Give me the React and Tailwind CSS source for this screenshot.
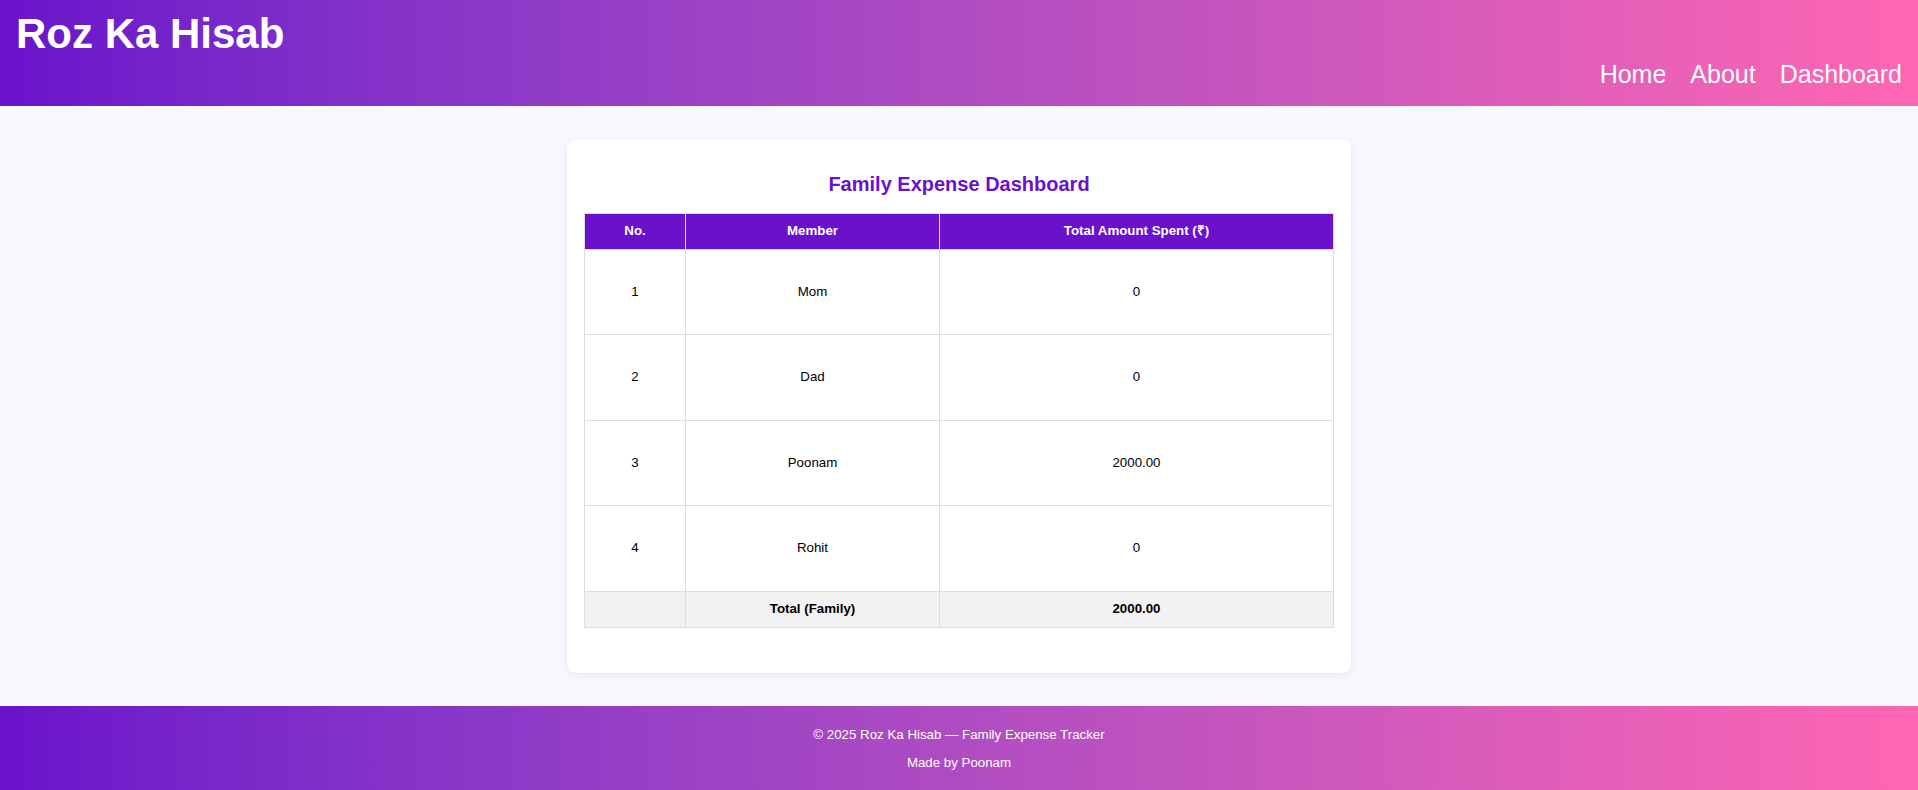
const members = [
  { id: 1, name: "Mom", total: "0" },
  { id: 2, name: "Dad", total: "0" },
  { id: 3, name: "Poonam", total: "2000.00" },
  { id: 4, name: "Rohit", total: "0" },
];

export default function App() {
  return (
    <div className="min-h-screen flex flex-col bg-[#f8f8ff] font-['Liberation_Sans',Arial,sans-serif]">
      <header className="h-[106px] flex justify-between bg-gradient-to-r from-[#6a11cb] to-[#ff66b2] text-white px-4">
        <h1 className="self-start pt-[10px] text-[42px] font-bold leading-[1.15]">Roz Ka Hisab</h1>
        <nav className="self-end pb-[17px] flex gap-[24px] text-[25px] leading-[1.15]">
          <a href="#">Home</a>
          <a href="#">About</a>
          <a href="#">Dashboard</a>
        </nav>
      </header>

      <main className="flex-1 flex justify-center pt-[34px]">
        <div className="w-[784px] h-[533px] bg-white rounded-[9px] shadow-[0_2px_10px_rgba(0,0,0,0.08)] px-[17px] pt-4">
          <h2 className="mt-[17px] mb-[16.6px] text-center text-[20px] leading-[23px] font-bold text-[#6a11cb]">
            Family Expense Dashboard
          </h2>
          <table className="w-full border-collapse text-[13.3px] text-black">
            <thead>
              <tr className="h-[36px] bg-[#6a11cb] text-white">
                <th className="w-[101px] border border-[#ddd] font-bold">No.</th>
                <th className="w-[254px] border border-[#ddd] font-bold">Member</th>
                <th className="border border-[#ddd] font-bold">Total Amount Spent (₹)</th>
              </tr>
            </thead>
            <tbody>
              {members.map((m) => (
                <tr key={m.id} className="h-[85.5px]">
                  <td className="border border-[#ddd] text-center">{m.id}</td>
                  <td className="border border-[#ddd] text-center">{m.name}</td>
                  <td className="border border-[#ddd] text-center">{m.total}</td>
                </tr>
              ))}
              <tr className="h-[36px] bg-[#f2f2f2] font-bold">
                <td className="border border-[#ddd]"></td>
                <td className="border border-[#ddd] text-center">Total (Family)</td>
                <td className="border border-[#ddd] text-center">2000.00</td>
              </tr>
            </tbody>
          </table>
        </div>
      </main>

      <footer className="h-[84px] bg-gradient-to-r from-[#6a11cb] to-[#ff66b2] text-white text-center text-[13.3px] leading-[1.15] pt-[8px]">
        <p className="my-[13px]">© 2025 Roz Ka Hisab — Family Expense Tracker</p>
        <p className="my-[13px]">Made by Poonam</p>
      </footer>
    </div>
  );
}
